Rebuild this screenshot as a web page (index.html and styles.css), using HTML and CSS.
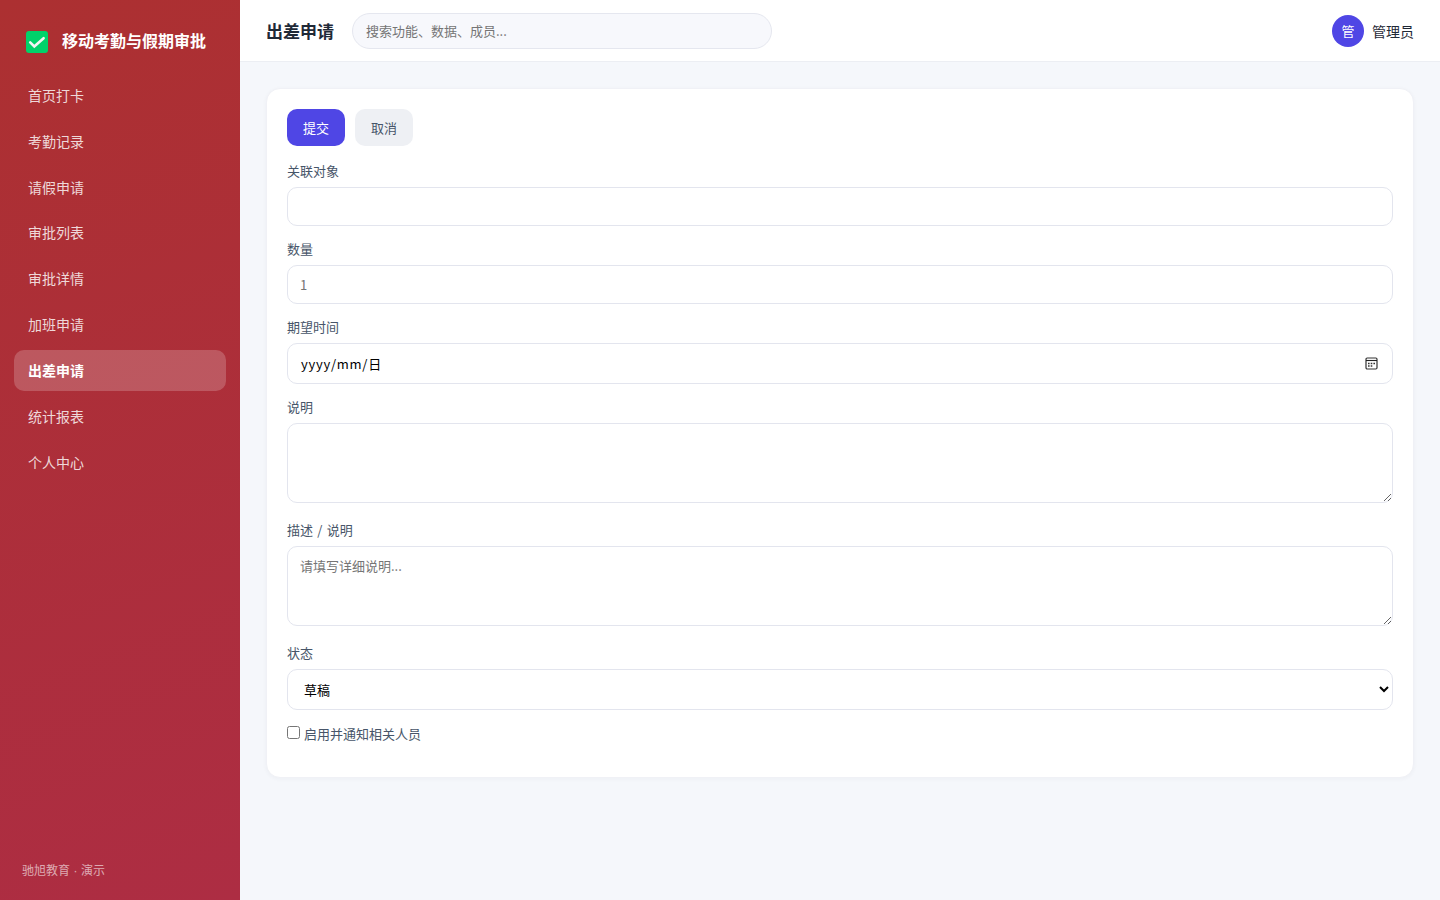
FILE: index.html
```html
<!DOCTYPE html>
<html lang="zh-CN">
<head>
<meta charset="utf-8">
<title>出差申请</title>
<link rel="stylesheet" href="styles.css">
</head>
<body>
<div class="app">
  <aside class="sidebar">
    <div class="brand">
      <svg class="logo" width="22" height="22" viewBox="0 0 22 22"><rect width="22" height="22" rx="3" fill="#00d26a"/><path d="M4.2 11.4 8.3 15.4 17.6 7.2" fill="none" stroke="#f4f4f4" stroke-width="2.6" stroke-linecap="round" stroke-linejoin="miter"/></svg>
      <span>移动考勤与假期审批</span>
    </div>
    <nav class="nav">
      <a class="nav-item">首页打卡</a>
      <a class="nav-item">考勤记录</a>
      <a class="nav-item">请假申请</a>
      <a class="nav-item">审批列表</a>
      <a class="nav-item">审批详情</a>
      <a class="nav-item">加班申请</a>
      <a class="nav-item active">出差申请</a>
      <a class="nav-item">统计报表</a>
      <a class="nav-item">个人中心</a>
    </nav>
    <div class="side-foot">驰旭教育 · 演示</div>
  </aside>
  <div class="main">
    <header class="topbar">
      <h1 class="title">出差申请</h1>
      <input class="search" placeholder="搜索功能、数据、成员...">
      <div class="user"><span class="avatar">管</span><span>管理员</span></div>
    </header>
    <main class="content">
      <form class="card">
        <div class="actions">
          <button type="button" class="btn primary">提交</button>
          <button type="button" class="btn">取消</button>
        </div>
        <div class="field"><label>关联对象</label><input class="control"></div>
        <div class="field"><label>数量</label><input class="control" placeholder="1"></div>
        <div class="field"><label>期望时间</label>
          <div class="control date"><span class="date-text">yyyy/mm/日</span>
            <svg width="13" height="13" viewBox="0 0 13 13"><rect x="1" y="1" width="11" height="11" rx="1.2" fill="none" stroke="#333" stroke-width="1.2"/><path d="M1 3.5H12" stroke="#222" stroke-width="1.1"/><path d="M3 6.5H4.6M5.7 6.5H7.3M8.4 6.5H10M3 9H4.6M5.7 9H7.3" stroke="#333" stroke-width="1.3"/></svg>
          </div>
        </div>
        <div class="field"><label>说明</label><textarea class="control area"></textarea></div>
        <div class="field"><label class="spaced">描述 / 说明</label><textarea class="control area" placeholder="请填写详细说明..."></textarea></div>
        <div class="field"><label>状态</label><select class="control select"><option>草稿</option></select></div>
        <label class="check"><input type="checkbox"><span>启用并通知相关人员</span></label>
      </form>
    </main>
  </div>
</div>
</body>
</html>
```
FILE: styles.css
```css
* { box-sizing: border-box; }
body {
  margin: 0;
  font-family: "Noto Sans CJK SC", sans-serif;
  font-size: 14px;
  color: #1f2937;
  background: #f5f7fb;
}
.app { display: flex; height: 900px; overflow: hidden; }
.sidebar {
  width: 240px;
  flex: none;
  display: flex;
  flex-direction: column;
  padding: 22px 14px 19px;
  background: linear-gradient(160deg, #ac3031, #ad2d43);
  color: #fff;
}
.brand {
  display: flex;
  align-items: center;
  height: 35px;
  gap: 14px;
  padding-left: 12px;
  margin-bottom: 18px;
  font-size: 16px;
  font-weight: 700;
  white-space: nowrap;
}
.logo { flex: none; margin-top: 5px; }
.nav { display: flex; flex-direction: column; gap: 5px; }
.nav-item {
  height: 40.83px;
  line-height: 41px;
  padding: 0 14px;
  border-radius: 10px;
  color: rgba(255, 255, 255, .82);
}
.nav-item.active {
  background: rgba(255, 255, 255, .2);
  color: #fff;
  font-weight: 700;
}
.side-foot {
  margin-top: auto;
  padding-left: 8px;
  font-family: "Liberation Sans", "Noto Sans CJK SC", sans-serif;
  font-size: 12px;
  line-height: 20px;
  word-spacing: .2px;
  color: rgba(255, 255, 255, .6);
}
.main { flex: 1; min-width: 0; }
.topbar {
  height: 62px;
  padding: 0 26px;
  display: flex;
  align-items: center;
  gap: 18px;
  background: #fff;
  border-bottom: 1px solid #eceef3;
}
.title { margin: 0; font-size: 17px; line-height: 24px; font-weight: 700; }
.search {
  width: 420px;
  height: 36px;
  padding: 0 13px 1px;
  border: 1px solid #e5e7ef;
  border-radius: 18px;
  background: #f7f8fc;
  font: 13px "Noto Sans CJK SC", sans-serif;
}
.search::placeholder, .control::placeholder { color: #757575; }
.user { margin-left: auto; display: flex; align-items: center; gap: 8px; }
.avatar {
  width: 32px;
  height: 32px;
  border-radius: 50%;
  background: #4f46e5;
  color: #fff;
  line-height: 31px;
  text-align: center;
  font-size: 13px;
}
.content { padding: 26px; }
.card {
  height: 690px;
  padding: 20px;
  border: 1px solid #f0f1f6;
  border-radius: 14px;
  background: #fff;
  box-shadow: 0 1px 4px rgba(30, 41, 80, .04);
}
.actions { display: flex; gap: 10px; margin-bottom: 16px; }
.btn {
  width: 58px;
  height: 37px;
  padding: 0 0 1px;
  border: 0;
  border-radius: 10px;
  background: #eef0f4;
  color: #475569;
  font: 13px "Noto Sans CJK SC", sans-serif;
}
.btn.primary { background: #4f46e5; color: #fff; }
.field { margin-bottom: 14px; }
.field label {
  display: block;
  height: 19px;
  line-height: 18px;
  margin-bottom: 6px;
  font-size: 13px;
  color: #475569;
}
.field .spaced { word-spacing: 1.4px; }
.control {
  display: block;
  width: 100%;
  height: 39px;
  padding: 0 12px;
  border: 1px solid #e3e5ee;
  border-radius: 10px;
  background: #fff;
  color: #000;
  font: 13px "Noto Sans CJK SC", sans-serif;
}
.date { height: 41px; display: flex; align-items: center; justify-content: space-between; padding: 0 14px 0 13px; }
.date-text { letter-spacing: .75px; }
.area { height: 80px; padding-top: 9px; margin-bottom: 18px; }
.select { height: 41px; padding-bottom: 1px; }
.check { display: flex; align-items: center; gap: 4px; height: 18px; font-size: 13px; color: #475569; }
.check input { width: 13px; height: 13px; margin: 0 0 1px; }
```
